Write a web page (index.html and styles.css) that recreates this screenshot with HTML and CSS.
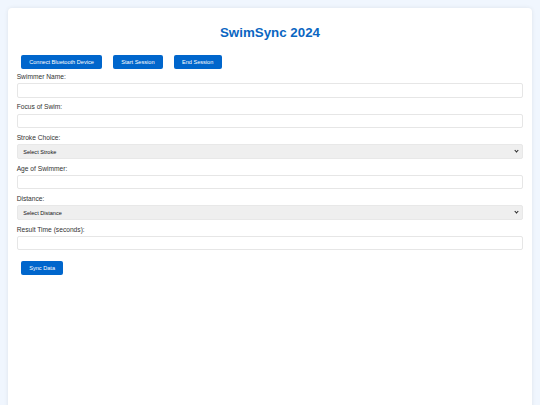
FILE: index.html
```html
<!DOCTYPE html>
<html lang="en">
<head>
    <meta charset="UTF-8">
    <meta name="viewport" content="width=device-width, initial-scale=1.0">
    <title>SwimSync 2024</title>
    <link rel="stylesheet" href="styles.css">
</head>
<body>
    <div class="container">
        <h1>SwimSync 2024</h1>

        <div class="controls">
            <button id="connectBtn" class="btn">Connect Bluetooth Device</button>
            <button id="startBtn" class="btn">Start Session</button>
            <button id="endBtn" class="btn">End Session</button>
        </div>

        <form id="swimForm">
            <label for="swimmerName">Swimmer Name:</label>
            <input type="text" id="swimmerName">

            <label for="focus">Focus of Swim:</label>
            <input type="text" id="focus">

            <label for="stroke">Stroke Choice:</label>
            <div class="select-wrap">
                <select id="stroke">
                    <option>Select Stroke</option>
                    <option>Freestyle</option>
                    <option>Backstroke</option>
                    <option>Breaststroke</option>
                    <option>Butterfly</option>
                </select>
            </div>

            <label for="age">Age of Swimmer:</label>
            <input type="number" id="age">

            <label for="distance">Distance:</label>
            <div class="select-wrap">
                <select id="distance">
                    <option>Select Distance</option>
                    <option>50m</option>
                    <option>100m</option>
                    <option>200m</option>
                    <option>400m</option>
                </select>
            </div>

            <label for="resultTime">Result Time (seconds):</label>
            <input type="number" id="resultTime">

            <button type="button" id="syncBtn" class="btn sync-btn">Sync Data</button>
        </form>
    </div>
</body>
</html>
```

FILE: styles.css
```css
* { box-sizing: border-box; }

body {
    margin: 0;
    padding: 8.33px;
    background: #f0f6fe;
    font-family: "Liberation Sans", Arial, sans-serif;
}

.container {
    min-height: 100vh;
    background: #fff;
    border-radius: 4px;
    padding: 8.33px;
    box-shadow: 0 0 4px rgba(0, 0, 0, 0.08);
}

h1 {
    text-align: center;
    color: #0a66c2;
    font-size: 13.33px;
    line-height: 16px;
    margin: 8.3px 0 10px;
}

.controls {
    display: flex;
    gap: 10.6px;
    padding: 4.17px 4.17px 3.6px;
}

.btn {
    background: #0066cc;
    color: #fff;
    border: none;
    border-radius: 2px;
    padding: 4.17px 8.4px;
    font-family: "Liberation Sans", Arial, sans-serif;
    font-size: 5.6px;
    line-height: 6px;
    cursor: pointer;
}

label {
    display: block;
    color: #333;
    font-size: 6.67px;
    line-height: 7.67px;
    margin-bottom: 2.8px;
}

input,
select {
    display: block;
    width: 100%;
    height: 14.4px;
    margin: 0 0 5.5px;
    border: 1px solid #e6e6e6;
    border-radius: 2px;
    font-family: "Liberation Sans", Arial, sans-serif;
}

input {
    padding: 0 3.33px;
    font-size: 6.67px;
    background: #fff;
}

.select-wrap { position: relative; }

select {
    appearance: none;
    -webkit-appearance: none;
    height: 14.8px;
    padding: 0 5.6px;
    font-size: 5.56px;
    color: #111;
    background: #efefef;
    border-color: #e8e8e8;
}

.select-wrap::after {
    content: "";
    position: absolute;
    right: 5px;
    top: 5px;
    width: 2px;
    height: 2px;
    border-right: 1.2px solid #222;
    border-bottom: 1.2px solid #222;
    transform: rotate(45deg);
    pointer-events: none;
}

.sync-btn {
    margin: 3.8px 0 0 4.17px;
}
```
